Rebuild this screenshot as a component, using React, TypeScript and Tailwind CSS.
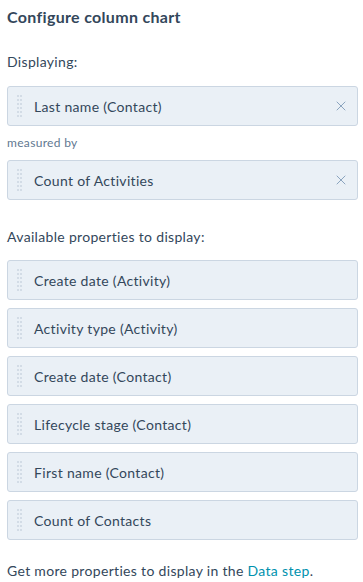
import { X } from 'lucide-react'

const font = { fontFamily: 'Lato, "Open Sans", sans-serif', letterSpacing: '0.02em' }

function Handle() {
  const dots = []
  for (let r = 0; r < 6; r++) {
    for (let c = 0; c < 2; c++) {
      dots.push(<rect key={`${r}-${c}`} x={c * 3} y={r * 4} width="2" height="2" fill="#d3dce6" />)
    }
  }
  return (
    <svg width="5" height="22" viewBox="0 0 5 22" className="shrink-0">
      {dots}
    </svg>
  )
}

function Pill({ label, removable }: { label: string; removable?: boolean }) {
  return (
    <div className="flex h-10 items-center rounded-[3px] border border-[#cbd6e2] bg-[#eaf0f6] pl-[9px] pr-[8px]">
      <Handle />
      <span className="ml-[12px] flex-1 text-[14px] text-[#33475b]">{label}</span>
      {removable && <X size={16} strokeWidth={1.3} className="text-[#7c98b6]" />}
    </div>
  )
}

export default function App() {
  const available = [
    'Create date (Activity)',
    'Activity type (Activity)',
    'Create date (Contact)',
    'Lifecycle stage (Contact)',
    'First name (Contact)',
    'Count of Contacts',
  ]

  return (
    <div className="w-[363px] bg-white pl-[7px] pr-[5px] text-[#33475b]" style={font}>
      <h2 className="pt-[7px] text-[16px] font-bold leading-[20px]">Configure column chart</h2>
      <div className="mt-[26px] text-[14px] leading-[18px]">Displaying:</div>
      <div className="mt-[15px]">
        <Pill label="Last name (Contact)" removable />
      </div>
      <div className="mt-[10px] text-[12px] leading-[14px] text-[#5f7891]">measured by</div>
      <div className="mt-[10px]">
        <Pill label="Count of Activities" removable />
      </div>
      <div className="mt-[28px] text-[14px] leading-[18px]">Available properties to display:</div>
      <div className="mt-[14px] flex flex-col gap-2">
        {available.map((a) => (
          <Pill key={a} label={a} />
        ))}
      </div>
      <p className="mt-[22px] text-[14px] leading-[18px]">
        Get more properties to display in the <span className="text-[#0091ae]">Data step</span>.
      </p>
    </div>
  )
}
